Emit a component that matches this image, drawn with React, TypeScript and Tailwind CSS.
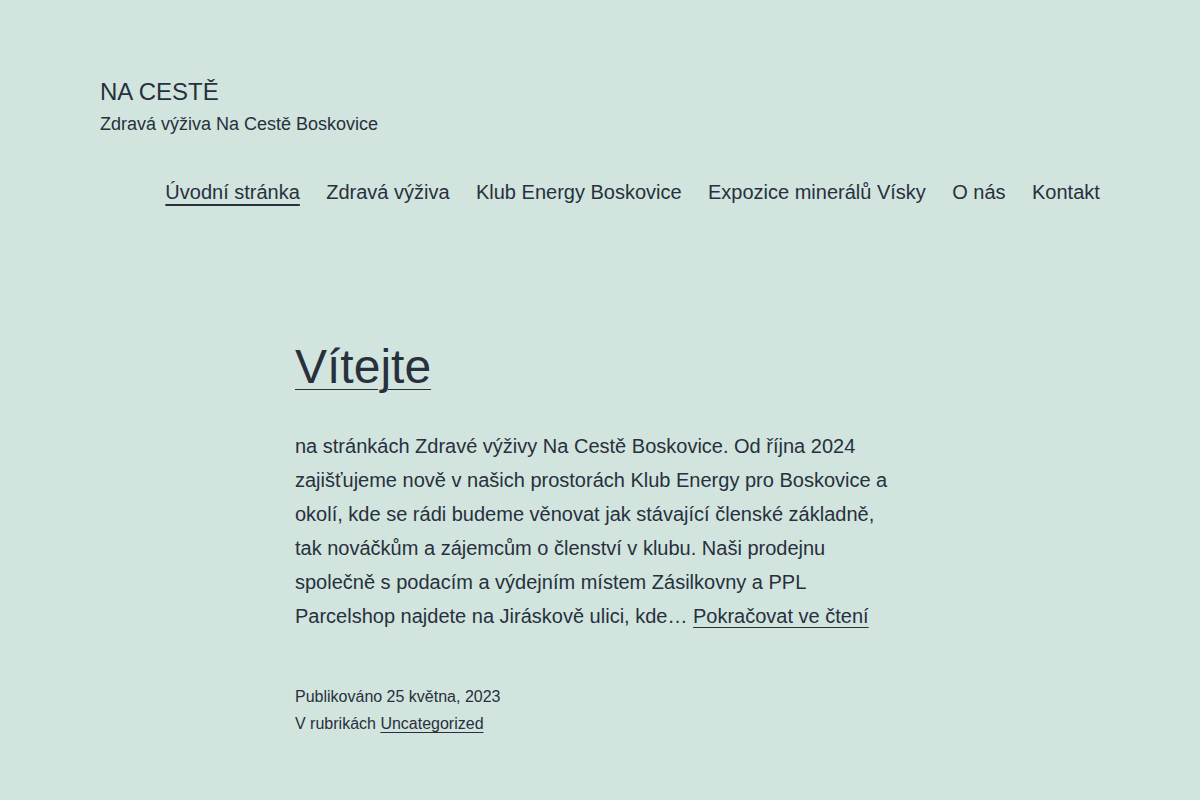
const navItems = [
  { label: "Úvodní stránka", current: true },
  { label: "Zdravá výživa" },
  { label: "Klub Energy Boskovice" },
  { label: "Expozice minerálů Vísky" },
  { label: "O nás" },
  { label: "Kontakt" },
];

function SiteHeader() {
  return (
    <header className="mx-auto flex w-[1000px] flex-col pt-[76px]">
      <div className="flex flex-col">
        <p className="text-[24px] leading-[31px] uppercase">NA CESTĚ</p>
        <p className="mt-[5px] text-[18px] leading-[25px]">Zdravá výživa Na Cestě Boskovice</p>
      </div>
      <nav className="mt-[35px] flex justify-end">
        <ul className="-mr-[13px] flex">
          {navItems.map((item) => (
            <li key={item.label}>
              <a
                href="#"
                className={
                  "block px-[13.2px] text-[20px] leading-[40px] " +
                  (item.current
                    ? "underline decoration-[1.5px] underline-offset-[5px]"
                    : "no-underline")
                }
              >
                {item.label}
              </a>
            </li>
          ))}
        </ul>
      </nav>
    </header>
  );
}

function Post() {
  return (
    <article className="mx-auto mt-[124px] w-[610px]">
      <h2 className="text-[48px] leading-[62px]">
        <a href="#" className="underline decoration-1 underline-offset-[6px]">
          Vítejte
        </a>
      </h2>
      <p className="mt-[31px] text-[20px] leading-[34px]">
        na stránkách Zdravé výživy Na Cestě Boskovice. Od října 2024 zajišťujeme nově v našich
        prostorách Klub Energy pro Boskovice a okolí, kde se rádi budeme věnovat jak stávající
        členské základně, tak nováčkům a zájemcům o členství v klubu. Naši prodejnu společně s
        podacím a výdejním místem Zásilkovny a PPL Parcelshop najdete na Jiráskově ulici, kde…{" "}
        <a href="#" className="underline decoration-1 underline-offset-[4px]">
          Pokračovat ve čtení
        </a>
      </p>
      <footer className="mt-[50px] text-[16px] leading-[27px]">
        <p>Publikováno 25 května, 2023</p>
        <p>
          V rubrikách{" "}
          <a href="#" className="underline decoration-1 underline-offset-[3px]">
            Uncategorized
          </a>
        </p>
      </footer>
    </article>
  );
}

export default function App() {
  return (
    <div className="min-h-[800px] bg-[#d1e4dd] pb-[60px] text-[#28303d] font-['Liberation_Sans',Arial,sans-serif]">
      <SiteHeader />
      <Post />
    </div>
  );
}
